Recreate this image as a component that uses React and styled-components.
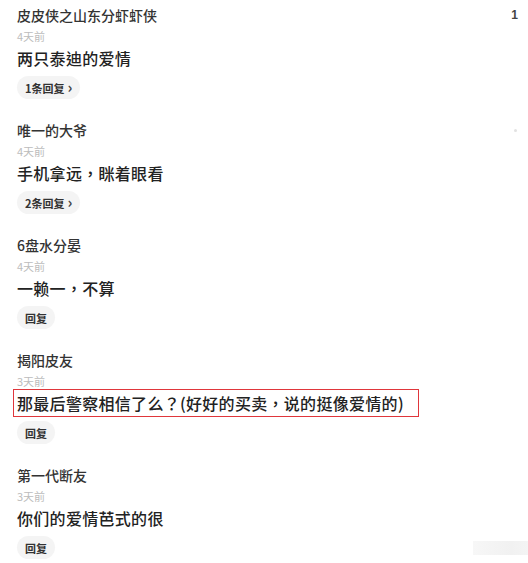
import React from 'react';
import styled, { createGlobalStyle } from 'styled-components';

const GlobalStyle = createGlobalStyle`
  html, body {
    margin: 0;
    padding: 0;
    background: #fff;
  }
  body {
    font-family: "Noto Sans CJK SC", "Noto Sans", sans-serif;
  }
`;

const List = styled.div`
  width: 528px;
  height: 563px;
  overflow: hidden;
  box-sizing: border-box;
  padding: 0 10px 0 17px;
  background: #fff;
`;

const Item = styled.div`
  height: 115px;
  box-sizing: border-box;
  padding-top: 5px;
`;

const NameRow = styled.div`
  display: flex;
  justify-content: space-between;
  align-items: center;
  height: 20px;
`;

const Name = styled.div`
  font-size: 14px;
  line-height: 20px;
  font-weight: 500;
  color: #333;
`;

const Likes = styled.div`
  font-size: 12px;
  font-weight: 700;
  color: #444;
  font-family: "Liberation Sans", sans-serif;
`;

const Dot = styled.div`
  width: 3px;
  height: 3px;
  border-radius: 50%;
  background: #e2e2e2;
  margin-right: 1px;
`;

const Time = styled.div`
  margin-top: 3px;
  font-size: 11px;
  line-height: 16px;
  color: #bcbcbc;
`;

const Content = styled.div`
  margin-top: 3px;
  font-family: "Noto Sans CJK TC", "Noto Sans CJK SC", sans-serif;
  font-size: 16px;
  line-height: 22px;
  font-weight: 500;
  letter-spacing: 0.3px;
  color: #222;
`;

const Highlight = styled.span`
  display: inline-block;
  margin: -3px 0 -3px -4px;
  padding: 2px 14px 2px 3px;
  border: 1px solid #e0363b;
`;

const ReplyRow = styled.div`
  margin-top: 7px;
  display: flex;
  justify-content: space-between;
  align-items: center;
`;

const ReplyPill = styled.div`
  display: inline-flex;
  align-items: center;
  gap: 3px;
  height: 23px;
  padding: 0 8px;
  border-radius: 12px;
  background: #f4f4f4;
  font-size: 11px;
  font-weight: 700;
  color: #333;
`;

const Chevron = styled.span`
  font-size: 15px;
  line-height: 1;
  color: #444;
  margin-top: -2px;
`;

const Fade = styled.div`
  width: 55px;
  height: 14px;
  margin-right: -10px;
  background: linear-gradient(90deg, #f7f7f7, #f1f1f1 70%, #f4f4f4);
`;

const comments = [
  { name: '皮皮侠之山东分虾虾侠', time: '4天前', text: '两只泰迪的爱情', replies: 1, likes: '1' },
  { name: '唯一的大爷', time: '4天前', text: '手机拿远，眯着眼看', replies: 2, dot: true },
  { name: '6盘水分晏', time: '4天前', text: '一赖一，不算' },
  { name: '揭阳皮友', time: '3天前', text: '那最后警察相信了么？(好好的买卖，说的挺像爱情的)', marked: true },
  { name: '第一代断友', time: '3天前', text: '你们的爱情芭式的很', fade: true },
];

export default function App() {
  return (
    <>
      <GlobalStyle />
      <List>
        {comments.map((c) => (
          <Item key={c.name}>
            <NameRow>
              <Name>{c.name}</Name>
              {c.likes && <Likes>{c.likes}</Likes>}
              {c.dot && <Dot />}
            </NameRow>
            <Time>{c.time}</Time>
            <Content>{c.marked ? <Highlight>{c.text}</Highlight> : c.text}</Content>
            <ReplyRow>
              <ReplyPill>
                {c.replies ? `${c.replies}条回复` : '回复'}
                {c.replies && <Chevron>›</Chevron>}
              </ReplyPill>
              {c.fade && <Fade />}
            </ReplyRow>
          </Item>
        ))}
      </List>
    </>
  );
}
